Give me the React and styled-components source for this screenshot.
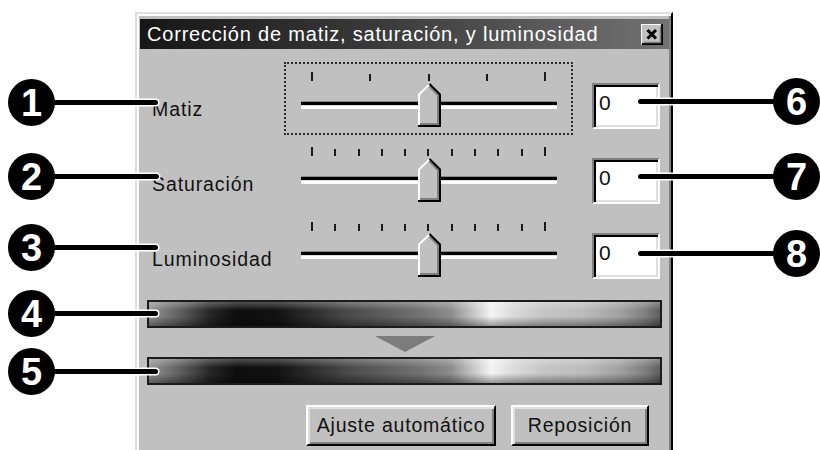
import React from 'react';
import styled, { createGlobalStyle } from 'styled-components';

const GlobalStyle = createGlobalStyle`
  html, body {
    margin: 0;
    padding: 0;
    background: #fff;
  }
  body {
    font-family: 'Liberation Sans', Arial, sans-serif;
  }
`;

const Page = styled.div`
  position: relative;
  width: 820px;
  height: 450px;
  overflow: hidden;
  background: #fff;
`;

const Dialog = styled.div`
  box-sizing: border-box;
  width: 538px;
  height: 470px;
  margin: 12px 0 0 135px;
  padding: 5px 2px 0 3px;
  background: #c0c0c0;
  border: 2px solid;
  border-color: #dfdfdf #000 #000 #dfdfdf;
  box-shadow: inset 2px 2px 0 #fff, inset -2px -2px 0 #808080;
`;

const TitleBar = styled.div`
  display: flex;
  align-items: center;
  justify-content: space-between;
  height: 30px;
  padding: 0 6px 0 7px;
  background: linear-gradient(90deg, #161616 0%, #3a3a3a 45%, #727272 100%);
  color: #fff;
  font-size: 20px;
  letter-spacing: 0.8px;
`;

const CloseButton = styled.div`
  display: flex;
  width: 22px;
  height: 21px;
`;

const Rows = styled.div`
  display: grid;
  grid-template-columns: 113px 289px 68px;
  grid-auto-rows: 73px;
  column-gap: 19px;
  row-gap: 2px;
  padding: 13px 0 0 12px;
`;

const Label = styled.div`
  padding-top: 36px;
  font-size: 19.5px;
  line-height: 23px;
  letter-spacing: 0.9px;
  white-space: nowrap;
  color: #111;
`;

const SliderBox = styled.div`
  position: relative;
  box-sizing: border-box;
  border: 2px dotted ${(p) => (p.$focused ? '#2a2a2a' : 'transparent')};
`;

const Ticks = styled.div`
  display: flex;
  justify-content: space-between;
  align-items: flex-end;
  height: 9px;
  margin-top: 8px;
  padding: 0 25px;
`;

const Tick = styled.div`
  width: 2px;
  height: ${(p) => (p.$end ? 9 : 7)}px;
  background: #1a1a1a;
`;

const Track = styled.div`
  height: 8px;
  margin: 20px 14px 0 15px;
  background: linear-gradient(#8a8a8a 0 1px, #000 1px 4px, #dcdcdc 4px 5px, #fff 5px 8px);
  border-radius: 1px;
`;

const Thumb = styled.svg`
  position: absolute;
  top: 19px;
  width: 23px;
  height: 44px;
`;

const EditBox = styled.div`
  box-sizing: border-box;
  width: 68px;
  height: 46px;
  margin-top: 21px;
  padding: 6px 0 0 5px;
  background: #fff;
  border: 2px solid;
  border-color: #808080 #fff #fff #808080;
  box-shadow: inset 2px 2px 0 #000, inset -2px -2px 0 #dfdfdf;
  font-size: 21px;
  line-height: 23px;
  color: #111;
`;

const Preview = styled.div`
  display: flex;
  flex-direction: column;
  padding: 15px 7px 0 7px;
`;

const HueBar = styled.div`
  box-sizing: border-box;
  height: 28px;
  border: 2px solid #1c1c1c;
  background:
    linear-gradient(180deg, rgba(255,255,255,0.28) 0%, rgba(255,255,255,0) 35%, rgba(0,0,0,0) 60%, rgba(0,0,0,0.38) 100%),
    linear-gradient(90deg,
      #949494 0%, #606060 6%, #262626 12%, #0e0e0e 17%, #121212 25%,
      #2e2e2e 32%, #4a4a4a 39%, #5e5e5e 46%, #727272 53%, #8c8c8c 59%,
      #c0c0c0 63%, #f4f4f4 67%, #dcdcdc 71%, #c6c6c6 77%, #bcbcbc 85%,
      #a2a2a2 92%, #808080 97%, #5e5e5e 100%);
`;

const Arrow = styled.div`
  align-self: center;
  width: 0;
  height: 0;
  margin: 8px 0 5px;
  border-left: 30px solid transparent;
  border-right: 30px solid transparent;
  border-top: 16px solid #7c7c7c;
`;

const Buttons = styled.div`
  display: flex;
  justify-content: flex-end;
  gap: 15px;
  margin-top: 20px;
  padding-right: 13px;
`;

const Button = styled.div`
  box-sizing: border-box;
  display: flex;
  align-items: center;
  justify-content: center;
  width: ${(p) => p.$w}px;
  height: 41px;
  background: #c0c0c0;
  border: 2px solid;
  border-color: #fff #000 #000 #fff;
  box-shadow: inset 2px 2px 0 #dfdfdf, inset -2px -2px 0 #808080;
  font-size: 19.5px;
  letter-spacing: 0.8px;
  color: #111;
`;

const Callout = styled.div`
  position: absolute;
  top: ${(p) => p.$y - 23}px;
  display: flex;
  align-items: center;
  flex-direction: ${(p) => (p.$right ? 'row-reverse' : 'row')};
  ${(p) => (p.$right ? `left: ${p.$to}px; right: 0;` : `left: 8px; width: ${p.$to - 8}px;`)}
`;

const Badge = styled.div`
  position: relative;
  z-index: 1;
  flex: none;
  display: flex;
  align-items: center;
  justify-content: center;
  width: 47px;
  height: 47px;
  border-radius: 50%;
  background: #000;
  color: #fff;
  font-size: 38px;
  font-weight: bold;
  line-height: 1;
`;

const Leader = styled.div`
  flex: 1;
  height: 5px;
  margin: 0 -2px;
  background: #000;
  border-radius: 3px;
  box-shadow: 0 0 0 1.5px #fff;
`;

function SliderThumb({ value }) {
  // track starts 15px in and is 256px wide; thumb runs 11px in from each end
  const center = 15 + 11 + value * (256 - 22);
  return (
    <Thumb viewBox="0 0 23 44" style={{ left: center - 11.5 }}>
      <polygon points="0,11 11.5,0 23,11 23,44 0,44" fill="#c0c0c0" />
      <polyline points="1,43 1,11.5 11.5,1.4" fill="none" stroke="#fff" strokeWidth="2" />
      <polyline points="11.5,3.6 20,12 20,41 2,41" fill="none" stroke="#808080" strokeWidth="2" />
      <polyline points="11.5,1 22,11.5 22,43 0,43" fill="none" stroke="#000" strokeWidth="2" />
    </Thumb>
  );
}

function Slider({ ticks, value, focused }) {
  return (
    <SliderBox $focused={focused}>
      <Ticks>
        {Array.from({ length: ticks }, (_, i) => (
          <Tick key={i} $end={i === 0 || i === ticks - 1} />
        ))}
      </Ticks>
      <Track />
      <SliderThumb value={value} />
    </SliderBox>
  );
}

const rows = [
  { label: 'Matiz', ticks: 5, focused: true },
  { label: 'Saturación', ticks: 11 },
  { label: 'Luminosidad', ticks: 11 },
];

const callouts = [
  { n: 1, y: 102, to: 156 },
  { n: 2, y: 176, to: 157 },
  { n: 3, y: 247, to: 156 },
  { n: 4, y: 313, to: 156 },
  { n: 5, y: 371, to: 156 },
  { n: 6, y: 101, to: 640, right: true },
  { n: 7, y: 176, to: 640, right: true },
  { n: 8, y: 253, to: 640, right: true },
];

export default function App() {
  return (
    <Page>
      <GlobalStyle />
      <Dialog>
        <TitleBar>
          <span>Corrección de matiz, saturación, y luminosidad</span>
          <CloseButton>
            <svg width="22" height="21" viewBox="0 0 22 21">
              <rect x="0" y="0" width="22" height="21" fill="#c0c0c0" />
              <polyline points="0,20 0,0 21,0" fill="none" stroke="#fff" strokeWidth="2" />
              <polyline points="1,20 21,20 21,0" fill="none" stroke="#000" strokeWidth="2" />
              <polyline points="3,18.5 19.5,18.5 19.5,3" fill="none" stroke="#808080" strokeWidth="1.5" />
              <path d="M6.5 6 L15 14.5 M15 6 L6.5 14.5" stroke="#000" strokeWidth="3" />
            </svg>
          </CloseButton>
        </TitleBar>

        <Rows>
          {rows.map((r) => (
            <React.Fragment key={r.label}>
              <Label>{r.label}</Label>
              <Slider ticks={r.ticks} value={0.5} focused={r.focused} />
              <EditBox>0</EditBox>
            </React.Fragment>
          ))}
        </Rows>

        <Preview>
          <HueBar />
          <Arrow />
          <HueBar />
          <Buttons>
            <Button $w={190}>Ajuste automático</Button>
            <Button $w={138}>Reposición</Button>
          </Buttons>
        </Preview>
      </Dialog>

      {callouts.map((c) => (
        <Callout key={c.n} $y={c.y} $to={c.to} $right={c.right}>
          <Badge>{c.n}</Badge>
          <Leader />
        </Callout>
      ))}
    </Page>
  );
}
